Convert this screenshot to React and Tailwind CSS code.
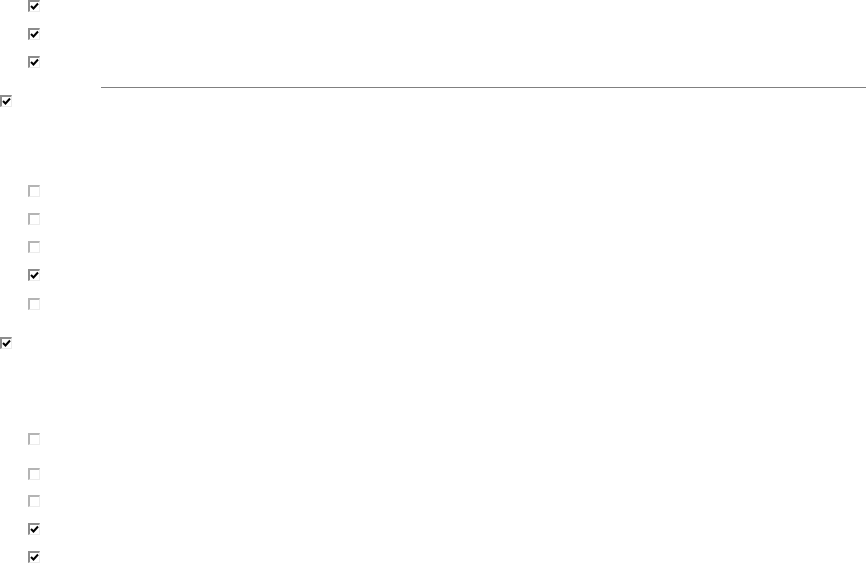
function Box({ checked }) {
  return (
    <div
      className={`w-[12px] h-[12px] border-t-2 border-l-2 border-b border-r ${
        checked ? "border-t-[#8c8c8c] border-l-[#8c8c8c]" : "border-t-[#b4b4b4] border-l-[#b4b4b4]"
      } border-b-[#ececec] border-r-[#ececec] bg-white flex items-center justify-center`}
    >
      {checked && (
        <svg width="9" height="9" viewBox="0 0 9 9">
          <path d="M1 4 L3.5 6.5 L8 1.5" fill="none" stroke="#000" strokeWidth="2" />
        </svg>
      )}
    </div>
  )
}

function Row({ checked, className = "" }) {
  return (
    <div className={`shrink-0 pl-[28px] h-[12px] ${className}`}>
      <Box checked={checked} />
    </div>
  )
}

export default function App() {
  return (
    <div className="w-[868px] h-[563px] bg-white overflow-hidden flex flex-col">
      <Row checked />
      <Row checked className="mt-[16px]" />
      <Row checked className="mt-[16px]" />
      <div className="shrink-0 ml-[101px] mr-[2px] mt-[19px] h-px bg-[#808080]" />
      <div className="shrink-0 mt-[7px] h-[12px]">
        <Box checked />
      </div>

      <Row className="mt-[78px]" />
      <Row className="mt-[16px]" />
      <Row className="mt-[16px]" />
      <Row checked className="mt-[16px]" />
      <Row className="mt-[17px]" />

      <div className="shrink-0 mt-[27px] h-[12px]">
        <Box checked />
      </div>

      <Row className="mt-[84px]" />
      <Row className="mt-[23px]" />
      <Row className="mt-[15px]" />
      <Row checked className="mt-[16px]" />
      <Row checked className="mt-[16px]" />
    </div>
  )
}
